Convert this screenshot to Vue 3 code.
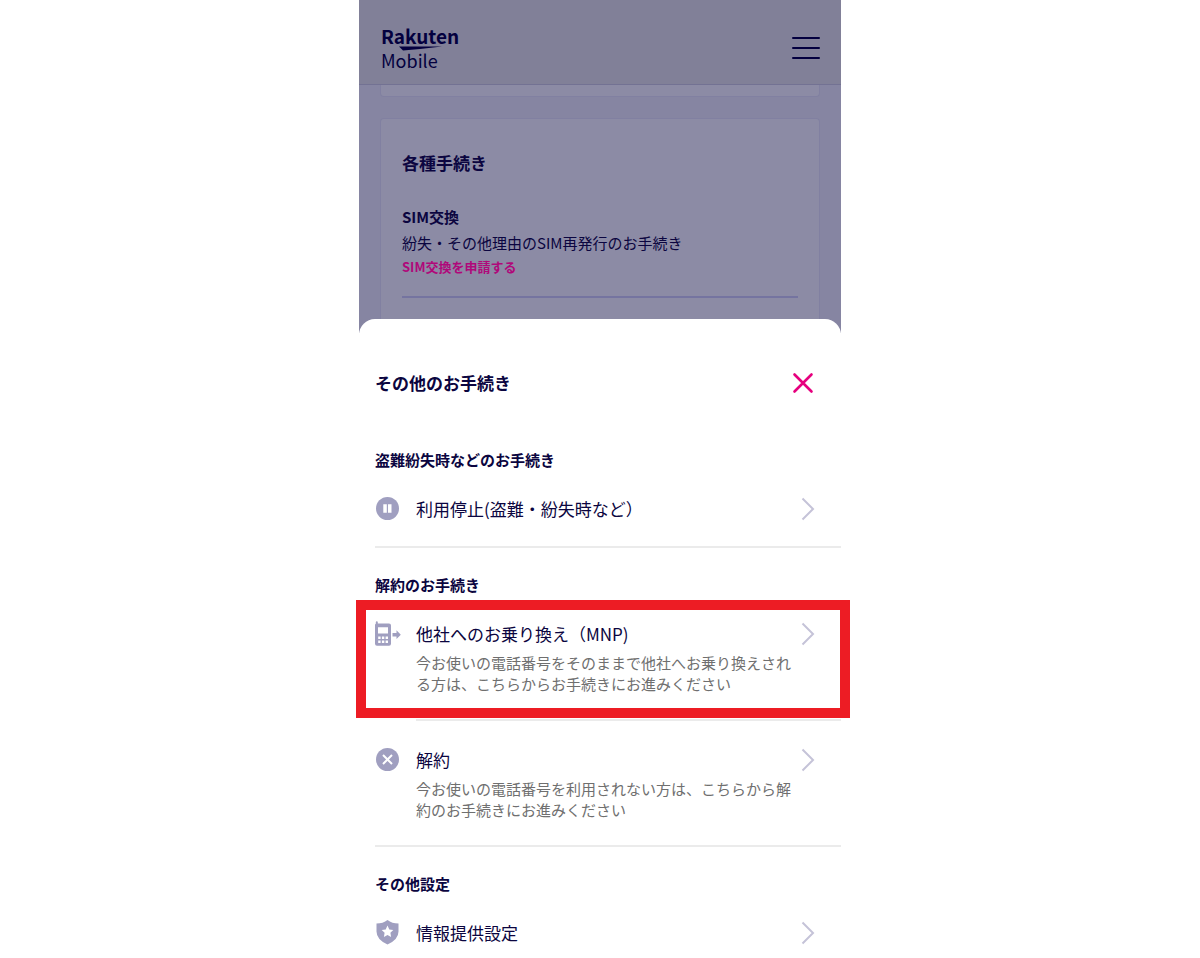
<template>
  <div class="phone">
    <div class="backdrop">
      <header class="header">
        <a href="#" class="logo" aria-label="Rakuten Mobile">
          <svg width="80" height="46" viewBox="0 0 80 46">
            <text x="-1" y="19" class="logo-main">Rakuten</text>
            <path d="M17 21.5H60Q40 24 21 25.5z" />
            <text x="-1" y="43" class="logo-sub">Mobile</text>
          </svg>
        </a>
        <button type="button" class="menu-btn" aria-label="メニュー">
          <span></span>
          <span></span>
          <span></span>
        </button>
      </header>

      <main class="content">
        <div class="card card-prev"></div>
        <section class="card card-main">
          <h2>各種手続き</h2>
          <div class="procedure">
            <h3>SIM交換</h3>
            <p>紛失・その他理由のSIM再発行のお手続き</p>
            <a href="#">SIM交換を申請する</a>
          </div>
        </section>
      </main>
    </div>

    <div class="sheet" role="dialog" aria-labelledby="sheet-title">
      <div class="sheet-head">
        <h2 id="sheet-title">その他のお手続き</h2>
        <button type="button" class="close-btn" aria-label="閉じる">
          <svg width="22" height="22" viewBox="0 0 22 22">
            <path d="M2.5 2.5L19.5 19.5M19.5 2.5L2.5 19.5" />
          </svg>
        </button>
      </div>

      <section v-for="group in groups" :key="group.title" class="group">
        <h3>{{ group.title }}</h3>
        <ul>
          <li
            v-for="item in group.items"
            :key="item.label"
            :class="['item', { marked: item.marked }]"
          >
            <a href="#" class="item-link">
              <svg class="icon" width="26" height="26" viewBox="0 0 26 26">
                <template v-if="item.icon === 'pause'">
                  <circle cx="12.5" cy="12.5" r="11.5" />
                  <path class="white" d="M8.3 8.3h3.5v8.4H8.3zM13 8.3h3.5v8.4H13z" />
                </template>
                <template v-else-if="item.icon === 'phone'">
                  <path
                    fill-rule="evenodd"
                    d="M.8 1.2Q.8 .2 1.8 .2T2.8 1.2V2.5H14Q16 2.5 16 4.5V22.8Q16 24.8 14 24.8H2Q0 24.8 0 22.8V4Q0 3 .8 2.8zM3 6.2V12.4H13V6.2zM3.2 15.6V18H5.6V15.6zM6.9 15.6V18H9.3V15.6zM10.6 15.6V18H13V15.6zM3.2 19.6V22H5.6V19.6zM6.9 19.6V22H9.3V19.6zM10.6 19.6V22H13V19.6z"
                  />
                  <path d="M17.5 12H21.5V9.3L25.8 13.7L21.5 18V15.4H17.5z" />
                </template>
                <template v-else-if="item.icon === 'cancel'">
                  <circle cx="12.5" cy="12.5" r="11.5" />
                  <path class="cross" d="M8 8L17 17M17 8L8 17" />
                </template>
                <template v-else>
                  <path d="M12.5 0Q17 3.5 23.5 3.5V11.5Q23.5 19.5 12.5 24.5Q1.5 19.5 1.5 11.5V3.5Q8 3.5 12.5 0z" />
                  <path
                    class="white"
                    d="M12.5 5.5L14.3 9.4L18.3 9.9L15.4 12.7L16.1 16.9L12.5 14.9L8.9 16.9L9.6 12.7L6.7 9.9L10.7 9.4z"
                  />
                </template>
              </svg>
              <span class="label">{{ item.label }}</span>
              <svg class="chevron" width="14" height="24" viewBox="0 0 14 24">
                <path d="M1.5 1.5L12 12L1.5 22.5" />
              </svg>
              <span v-if="item.desc" class="desc">{{ item.desc }}</span>
            </a>
          </li>
        </ul>
      </section>
    </div>
  </div>
</template>

<script setup>
const groups = [
  {
    title: '盗難紛失時などのお手続き',
    items: [{ label: '利用停止(盗難・紛失時など）', icon: 'pause' }],
  },
  {
    title: '解約のお手続き',
    items: [
      {
        label: '他社へのお乗り換え（MNP)',
        icon: 'phone',
        desc: '今お使いの電話番号をそのままで他社へお乗り換えされる方は、こちらからお手続きにお進みください',
        marked: true,
      },
      {
        label: '解約',
        icon: 'cancel',
        desc: '今お使いの電話番号を利用されない方は、こちらから解約のお手続きにお進みください',
      },
    ],
  },
  {
    title: 'その他設定',
    items: [{ label: '情報提供設定', icon: 'shield' }],
  },
];
</script>

<style>
body {
  background: #fff;
}
</style>

<style scoped>
.phone {
  max-width: 482px;
  margin: 0 auto;
  color: #0b0540;
  font-family: "Noto Sans CJK JP", sans-serif;
}

h2,
h3,
p,
ul {
  margin: 0;
  padding: 0;
}

ul {
  list-style: none;
}

a {
  color: inherit;
  text-decoration: none;
}

button {
  padding: 0;
  border: none;
  background: none;
  cursor: pointer;
}

.backdrop {
  overflow: hidden;
  background: #8685a2;
}

.header {
  display: flex;
  align-items: center;
  justify-content: space-between;
  padding: 25px 21px 13px 23px;
  border-bottom: 1px solid #737293;
  background: #818098;
}

.logo,
.logo svg {
  display: block;
}

.logo svg {
  overflow: visible;
  fill: #04003f;
}

.logo-main {
  font-size: 19px;
  font-weight: 700;
}

.logo-sub {
  font-size: 18px;
}

.menu-btn {
  display: flex;
  flex-direction: column;
  gap: 8px;
}

.menu-btn span {
  width: 28px;
  height: 2px;
  border-radius: 1px;
  background: #04003f;
}

.content {
  display: flex;
  flex-direction: column;
  gap: 21px;
  padding: 0 21px;
}

.card {
  border: 1px solid #8180a1;
  border-radius: 4px;
  background: #8c8ba5;
}

.card-prev {
  height: 11px;
  border-top: none;
  border-radius: 0 0 4px 4px;
}

.card-main {
  padding: 32px 21px 35px;
  border-bottom: none;
  border-radius: 4px 4px 0 0;
}

.card-main h2 {
  font-size: 17px;
  line-height: 24px;
}

.procedure {
  padding: 30px 0 19px;
  border-bottom: 2px solid #7574a0;
}

.procedure h3 {
  font-size: 15px;
  line-height: 24px;
}

.procedure p {
  padding: 2px 0;
  font-size: 15px;
  line-height: 24px;
}

.procedure a {
  display: block;
  color: #b0087a;
  font-size: 13px;
  font-weight: 700;
  line-height: 20px;
}

.sheet {
  position: relative;
  margin-top: -14px;
  padding: 48px 0 0 16px;
  border-radius: 16px 16px 0 0;
  background: #fff;
}

.sheet-head {
  display: flex;
  align-items: center;
  justify-content: space-between;
  padding: 0 27px 24px 0;
}

.sheet-head h2 {
  font-size: 17px;
  line-height: 32px;
}

.close-btn svg {
  display: block;
  fill: none;
  stroke: #e6007e;
  stroke-width: 2.6;
  stroke-linecap: round;
}

.group h3 {
  padding-top: 25px;
  font-size: 15px;
  line-height: 24px;
}

.item {
  position: relative;
}

.item-link {
  display: grid;
  grid-template-columns: 26px 1fr 14px;
  align-items: center;
  padding: 25px 26px 25px 0;
}

.item + .item .item-link {
  padding-top: 27px;
}

.icon {
  margin: -1px 0;
  fill: #a09fc0;
}

.icon .white {
  fill: #fff;
}

.icon .cross {
  fill: none;
  stroke: #fff;
  stroke-width: 2;
}

.label {
  padding-left: 15px;
  font-size: 17px;
  line-height: 24px;
}

.chevron {
  fill: none;
  stroke: #c5c3d8;
  stroke-width: 2;
}

.desc {
  grid-column: 2;
  padding: 6px 0 0 15px;
  color: #6f6f6f;
  font-size: 15px;
  line-height: 21px;
}

.group:not(:last-child) ul {
  border-bottom: 2px solid #ebebeb;
}

.item:not(:last-child)::after {
  display: block;
  height: 2px;
  margin-left: 41px;
  background: #ebebeb;
  content: "";
}

.group:last-child .item-link {
  padding-bottom: 12px;
}

/* red frame drawn over the highlighted row */
.marked::before {
  position: absolute;
  inset: 3px -9px 3px -19px;
  border: 10px solid #ed1c24;
  content: "";
  pointer-events: none;
}
</style>
